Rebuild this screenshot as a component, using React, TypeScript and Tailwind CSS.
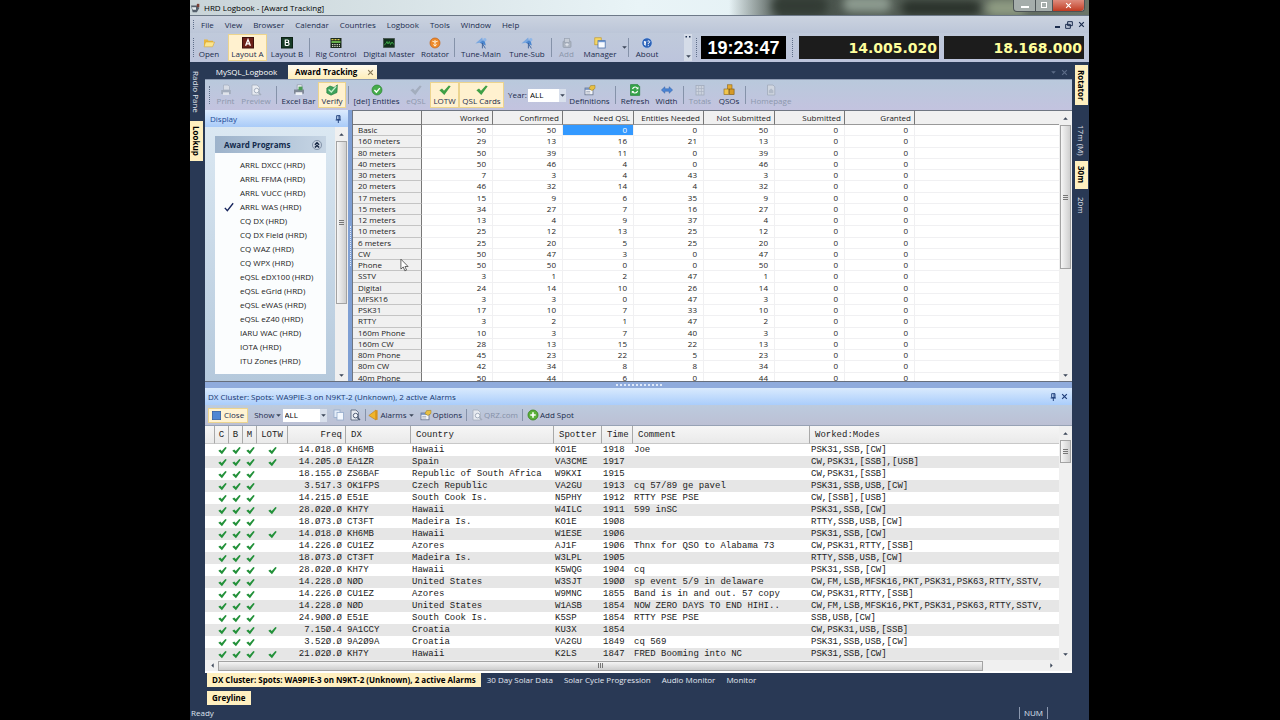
import type { ReactNode } from "react";

const menus = ["File", "View", "Browser", "Calendar", "Countries", "Logbook", "Tools", "Window", "Help"];

const programs = [
  "ARRL DXCC (HRD)", "ARRL FFMA (HRD)", "ARRL VUCC (HRD)", "ARRL WAS (HRD)", "CQ DX (HRD)",
  "CQ DX Field (HRD)", "CQ WAZ (HRD)", "CQ WPX (HRD)", "eQSL eDX100 (HRD)", "eQSL eGrid (HRD)",
  "eQSL eWAS (HRD)", "eQSL eZ40 (HRD)", "IARU WAC (HRD)", "IOTA (HRD)", "ITU Zones (HRD)",
];

const awardColumns = ["Worked", "Confirmed", "Need QSL", "Entities Needed", "Not Submitted", "Submitted", "Granted"];

const awards: [string, number[]][] = [
  ["Basic", [50, 50, 0, 0, 50, 0, 0]],
  ["160 meters", [29, 13, 16, 21, 13, 0, 0]],
  ["80 meters", [50, 39, 11, 0, 39, 0, 0]],
  ["40 meters", [50, 46, 4, 0, 46, 0, 0]],
  ["30 meters", [7, 3, 4, 43, 3, 0, 0]],
  ["20 meters", [46, 32, 14, 4, 32, 0, 0]],
  ["17 meters", [15, 9, 6, 35, 9, 0, 0]],
  ["15 meters", [34, 27, 7, 16, 27, 0, 0]],
  ["12 meters", [13, 4, 9, 37, 4, 0, 0]],
  ["10 meters", [25, 12, 13, 25, 12, 0, 0]],
  ["6 meters", [25, 20, 5, 25, 20, 0, 0]],
  ["CW", [50, 47, 3, 0, 47, 0, 0]],
  ["Phone", [50, 50, 0, 0, 50, 0, 0]],
  ["SSTV", [3, 1, 2, 47, 1, 0, 0]],
  ["Digital", [24, 14, 10, 26, 14, 0, 0]],
  ["MFSK16", [3, 3, 0, 47, 3, 0, 0]],
  ["PSK31", [17, 10, 7, 33, 10, 0, 0]],
  ["RTTY", [3, 2, 1, 47, 2, 0, 0]],
  ["160m Phone", [10, 3, 7, 40, 3, 0, 0]],
  ["160m CW", [28, 13, 15, 22, 13, 0, 0]],
  ["80m Phone", [45, 23, 22, 5, 23, 0, 0]],
  ["80m CW", [42, 34, 8, 8, 34, 0, 0]],
  ["40m Phone", [50, 44, 6, 0, 44, 0, 0]],
];

// LOTW flag, frequency, DX, country, spotter, time, comment, modes
type Spot = [boolean, string, string, string, string, string, string, string];
const allModes = "CW,FM,LSB,MFSK16,PKT,PSK31,PSK63,RTTY,SSTV,";
const spots: Spot[] = [
  [true, "14.Ø18.Ø", "KH6MB", "Hawaii", "KO1E", "1918", "Joe", "PSK31,SSB,[CW]"],
  [true, "14.2Ø5.Ø", "EA1ZR", "Spain", "VA3CME", "1917", "", "CW,PSK31,[SSB],[USB]"],
  [false, "18.155.Ø", "ZS6BAF", "Republic of South Africa", "W9KXI", "1915", "", "CW,PSK31,[SSB]"],
  [false, "3.517.3", "OK1FPS", "Czech Republic", "VA2GU", "1913", "cq 57/89 ge pavel", "PSK31,SSB,USB,[CW]"],
  [false, "14.215.Ø", "E51E", "South Cook Is.", "N5PHY", "1912", "RTTY PSE PSE", "CW,[SSB],[USB]"],
  [true, "28.Ø2Ø.Ø", "KH7Y", "Hawaii", "W4ILC", "1911", "599 inSC", "PSK31,SSB,[CW]"],
  [false, "18.Ø73.Ø", "CT3FT", "Madeira Is.", "KO1E", "19Ø8", "", "RTTY,SSB,USB,[CW]"],
  [true, "14.Ø18.Ø", "KH6MB", "Hawaii", "W1ESE", "19Ø6", "", "PSK31,SSB,[CW]"],
  [false, "14.226.Ø", "CU1EZ", "Azores", "AJ1F", "19Ø6", "Thnx for QSO to Alabama 73", "CW,PSK31,RTTY,[SSB]"],
  [false, "18.Ø73.Ø", "CT3FT", "Madeira Is.", "W3LPL", "19Ø5", "", "RTTY,SSB,USB,[CW]"],
  [true, "28.Ø2Ø.Ø", "KH7Y", "Hawaii", "K5WQG", "19Ø4", "cq", "PSK31,SSB,[CW]"],
  [false, "14.228.Ø", "NØD", "United States", "W3SJT", "19ØØ", "sp event 5/9 in delaware", allModes],
  [false, "14.226.Ø", "CU1EZ", "Azores", "W9MNC", "1855", "Band is in and out. 57 copy", "CW,PSK31,RTTY,[SSB]"],
  [false, "14.228.Ø", "NØD", "United States", "W1ASB", "1854", "NOW ZERO DAYS TO END HIHI..", allModes],
  [false, "24.9ØØ.Ø", "E51E", "South Cook Is.", "K5SP", "1854", "RTTY PSE PSE", "SSB,USB,[CW]"],
  [true, "7.15Ø.4", "9A1CCY", "Croatia", "KU3X", "1854", "", "CW,PSK31,USB,[SSB]"],
  [false, "3.52Ø.Ø", "9A2Ø9A", "Croatia", "VA2GU", "1849", "cq 569", "PSK31,SSB,USB,[CW]"],
  [true, "21.Ø2Ø.Ø", "KH7Y", "Hawaii", "K2LS", "1847", "FRED Booming into NC", "PSK31,SSB,[CW]"],
];

/* ---------- icons ---------- */

function Svg({ children, className = "h-3 w-3" }: { children: ReactNode; className?: string }) {
  return (
    <svg viewBox="0 0 12 12" className={className} aria-hidden="true">
      {children}
    </svg>
  );
}

const FolderIcon = () => (
  <Svg>
    <path d="M1 2.5h3.5l1 1.2H10V9H1z" fill="#e9b83e" />
    <path d="M2.6 5H11.5L9.6 9.8H1z" fill="#fbe58d" stroke="#d39c28" strokeWidth=".5" />
  </Svg>
);
const LayoutAIcon = () => (
  <Svg>
    <rect x=".5" y=".5" width="11" height="10.5" fill="#6b1f17" stroke="#3c120e" />
    <path d="M3.6 8.8 6 2.6l2.4 6.2M4.5 6.9h3" fill="none" stroke="#fff" strokeWidth="1.3" />
  </Svg>
);
const LayoutBIcon = () => (
  <Svg>
    <rect x=".5" y=".5" width="11" height="10.5" fill="#173b26" stroke="#0c2115" />
    <path d="M4.3 2.6v6M4.3 3h2.2q1.2 0 1.2 1.2T6.5 5.5H4.3M6.5 5.5q1.6 0 1.6 1.5T6.5 8.5H4.3" fill="none" stroke="#fff" strokeWidth="1.2" />
  </Svg>
);
const RigIcon = () => (
  <Svg>
    <rect x=".5" y="1" width="11" height="10" fill="#1c2a1c" />
    <path d="M1.5 2.6h9" stroke="#d9c94b" strokeWidth="1.2" strokeDasharray="2 1" />
    <path d="M1.5 5h9" stroke="#7bd35a" strokeWidth="1.6" />
    <path d="M2 7.6h8M2 9.4h8" stroke="#e6e8d8" strokeWidth="1" strokeDasharray="1.3 1" />
  </Svg>
);
const DigitalIcon = () => (
  <Svg>
    <rect x=".5" y="1.5" width="11" height="9" fill="#13301b" stroke="#38443c" strokeWidth=".6" />
    <path d="M1.2 8 3 6.5 4 4.5 5 7l1.3-2.5L7.5 7.5 9 5l1.8 2.5" fill="none" stroke="#3fae4c" strokeWidth=".9" />
  </Svg>
);
const RotatorIcon = () => (
  <Svg>
    <circle cx="6" cy="6" r="5" fill="#ee8b2d" stroke="#c25f11" strokeWidth=".7" />
    <path d="M3.3 4.2q2.7 2 5.4 0M6 3v6M4.4 7.4 6 9.2l1.6-1.8" fill="none" stroke="#fff2d8" strokeWidth="1" />
  </Svg>
);
const TuneIcon = () => (
  <Svg>
    <path d="M.4 6.4 7.200 .6l1 4.600z" fill="#7ba8e0" />
    <path d="m4.600 5.800 4.800-3.400 1.400 6z" fill="#4a86cf" />
    <path d="m7 6 3.400 5.400M7.400 6v5.400" stroke="#3a5f99" strokeWidth=".9" />
    <circle cx="9.800" cy="2.800" r="1.700" fill="#90b7e8" />
  </Svg>
);
const AddIcon = () => (
  <Svg>
    <rect x="2" y="4" width="8" height="6.5" rx="1" fill="#adb5c2" stroke="#929cab" strokeWidth=".7" />
    <rect x="3.6" y="1.5" width="5" height="4" fill="#c6ccd6" stroke="#98a1b0" strokeWidth=".7" />
    <path d="M6 6v3.4M4.3 7.7h3.4" stroke="#e4e8ee" />
  </Svg>
);
const ManagerIcon = () => (
  <Svg>
    <rect x=".8" y=".8" width="6.4" height="7" fill="#f6d765" stroke="#c49a28" strokeWidth=".7" />
    <rect x="4" y="3.6" width="7.2" height="7.4" fill="#f8fbff" stroke="#4b72ab" strokeWidth=".8" />
    <path d="M4 4.6h7.2" stroke="#6d97d3" strokeWidth="1.2" />
  </Svg>
);
const AboutIcon = () => (
  <Svg>
    <circle cx="6" cy="6" r="5.2" fill="#2d63b8" stroke="#c6d8f0" strokeWidth=".7" />
    <path d="M3.4 4v2.6q0 1.6 1.4 1.6M6.6 4.2q2-1 2.2.5 0 1-1.5 1.6v.9M7.3 8.2v.9M4.8 4.2 4 8" fill="none" stroke="#fff" strokeWidth="1" />
  </Svg>
);
const PrinterIcon = ({ color = "#a3adbd" }: { color?: string }) => (
  <Svg>
    <path d="M3.5 1h4.6l1.4 1.5V6h-6z" fill="#d8dde6" stroke={color} strokeWidth=".7" />
    <path d="M1.2 6h9.6v4H1.2z" fill={color} />
    <path d="M3 8.3h6V11H3z" fill="#dfe3ea" />
  </Svg>
);
const PreviewIcon = ({ color = "#a3adbd" }: { color?: string }) => (
  <Svg>
    <path d="M2 1h5l2.4 2.4V11H2z" fill="#e6eaf0" stroke={color} strokeWidth=".8" />
    <circle cx="6.6" cy="6.6" r="2.3" fill="#f3f6fa" stroke={color} />
    <path d="m8.4 8.4 2.6 2.6" stroke={color} strokeWidth="1.4" />
  </Svg>
);
const ExcelIcon = () => (
  <Svg>
    <path d="M4.2.8H9v4.8H4.2z" fill="#f6f8fb" stroke="#8a94a5" strokeWidth=".7" />
    <path d="M1 5.5h10v4.2H1z" fill="#7f8897" />
    <path d="M2.6 8.2h6.6V11H2.6z" fill="#eef1f5" />
    <path d="M5.5 2.6h4v3.6h-4z" fill="#4c9c57" />
  </Svg>
);
const VerifyIcon = () => (
  <Svg>
    <path d="M.8 4 4 2l4 1.500L11.400.8 11 8.500 5 11.200.8 9z" fill="#3fa35b" stroke="#1d7b3c" strokeWidth=".6" />
    <path d="m2.600 5.600 2.700 2.400 5-5.600" fill="none" stroke="#c9f0cd" strokeWidth="1.300" />
  </Svg>
);
const EntitiesIcon = () => (
  <Svg>
    <circle cx="6" cy="6" r="5" fill="#46ad4b" stroke="#2a8231" strokeWidth=".7" />
    <path d="m3.4 6 2 2.1 3.4-4" fill="none" stroke="#fff" strokeWidth="1.4" />
  </Svg>
);
const TickIcon = ({ color = "#3fa046", className }: { color?: string; className?: string }) => (
  <Svg className={className}>
    <path d="M.4 6.200 3 4.600l2 2.200L9.800 1.400l1.900.9-6.400 8.700z" fill={color} />
  </Svg>
);
const DefinitionsIcon = () => (
  <Svg>
    <rect x="1" y="4" width="8" height="6.8" fill="#f4f6fa" stroke="#66738c" strokeWidth=".8" />
    <path d="M1 5h8" stroke="#5b7fb8" strokeWidth="1.4" />
    <path d="M2.2 7.4h4M2.2 9h4" stroke="#8c96a8" strokeWidth=".7" />
    <path d="m5 4.6 1.6-3L11 1.4v3L8 6.6z" fill="#e8c043" stroke="#987a1d" strokeWidth=".5" />
  </Svg>
);
const RefreshIcon = () => (
  <Svg>
    <path d="M1.5.6h7.2l2 2v8.8H1.5z" fill="#35a447" stroke="#1d7a30" strokeWidth=".6" />
    <path d="M3.6 5.2Q4 3 6.2 3q1.6 0 2.2 1.2M8.6 6.8Q8 9 6 9q-1.500 0-2.300-1.200" fill="none" stroke="#fff" strokeWidth="1.2" />
    <path d="M9.400 2.800v2.400H7zM2.800 9.400V7h2.400z" fill="#fff" />
  </Svg>
);
const WidthIcon = () => (
  <Svg>
    <path d="M.4 6 3.800 2.800v2h4.400v-2L11.600 6 8.200 9.200v-2H3.800v2z" fill="#4b86d6" stroke="#2a5ba4" strokeWidth=".5" />
  </Svg>
);
const TotalsIcon = () => (
  <Svg>
    <rect x="2" y="1.500" width="8" height="9.500" fill="#ccd3de" stroke="#a1abbb" strokeWidth=".8" />
    <path d="M4.600 1.500V11M7.400 1.500V11M2 4.500h8M2 7.500h8" stroke="#a9b2c1" strokeWidth=".7" />
  </Svg>
);
const QsosIcon = () => (
  <Svg>
    <rect x="4.500" y=".8" width="4.500" height="4.500" fill="#e3a92f" stroke="#8c6516" strokeWidth=".6" />
    <rect x="1" y="5" width="4.800" height="5.600" fill="#f0c64e" stroke="#8c6516" strokeWidth=".6" />
    <rect x="6.300" y="5" width="4.800" height="5.600" fill="#d69a26" stroke="#7a5712" strokeWidth=".6" />
  </Svg>
);
const HomeIcon = () => (
  <Svg>
    <path d="M2.500 1h5.500l1.800 1.800V11H2.500z" fill="#d0d6e0" stroke="#a1abbb" strokeWidth=".8" />
    <path d="m3.800 6.600 2.300-2.200 2.300 2.200v2.600H3.800z" fill="#b1bac8" />
  </Svg>
);
const CloseIcon = () => (
  <Svg className="h-[9px] w-[9px]">
    <rect x=".5" y=".5" width="11" height="11" fill="#4f86d3" stroke="#2c5aa0" />
  </Svg>
);
const CopyIcon = () => (
  <Svg>
    <rect x="1" y="1" width="6" height="7.500" fill="#e4edf8" stroke="#93abcb" strokeWidth=".8" />
    <rect x="4" y="3.500" width="6.500" height="7.500" fill="#f3f8fe" stroke="#93abcb" strokeWidth=".8" />
  </Svg>
);
const BellIcon = () => (
  <Svg>
    <path d="M.8 6.500 8 1v10z" fill="#f0b52c" stroke="#b87b12" strokeWidth=".6" />
    <path d="M7.600 1.200h2v9.600h-2z" fill="#d8931b" />
  </Svg>
);
const PlusIcon = () => (
  <Svg>
    <circle cx="6" cy="6" r="5" fill="#5cb13b" stroke="#35801c" strokeWidth=".8" />
    <path d="M6 3.300v5.400M3.300 6h5.400" stroke="#fff" strokeWidth="1.600" />
  </Svg>
);
const PinIcon = () => (
  <Svg className="h-2 w-2">
    <path d="M4 1h5v6H4zM2.500 7.500h8M6.500 7.500V12" fill="none" stroke="#1d3c78" strokeWidth="1.400" />
    <path d="M7.500 1v6" stroke="#1d3c78" strokeWidth="1.400" />
  </Svg>
);
const CrossIcon = ({ color = "#1d3c78" }: { color?: string }) => (
  <Svg className="h-[7px] w-[7px]">
    <path d="m2 2 8 8M10 2l-8 8" stroke={color} strokeWidth="2" />
  </Svg>
);
const Triangle = ({ dir = "down", color = "#3b4658" }: { dir?: "up" | "down" | "left" | "right"; color?: string }) => {
  const d = { up: "M2 8h8L6 4z", down: "M2 4h8L6 8z", left: "M8 2v8L4 6z", right: "M4 2v8l4-4z" }[dir];
  return (
    <Svg className="h-[7px] w-[7px] shrink-0">
      <path d={d} fill={color} />
    </Svg>
  );
};

/* ---------- small parts ---------- */

function ToolButton({ icon, label, width, active, disabled }: {
  icon: ReactNode; label: string; width: string; active?: boolean; disabled?: boolean;
}) {
  const tone = active ? "border-[#ecd48e] bg-[#fff1cf]" : "border-transparent";
  return (
    <button
      type="button"
      disabled={disabled}
      aria-pressed={active}
      className={`flex shrink-0 flex-col items-center justify-center border ${tone} ${width} ${disabled ? "text-[#8c97ac]" : "text-[#1b2c4d]"}`}
    >
      {icon}
      <span className="whitespace-nowrap leading-[10px]">{label}</span>
    </button>
  );
}

const Sep = ({ className = "w-[5px]" }: { className?: string }) => (
  <div className={`flex shrink-0 justify-center py-1 ${className}`}>
    <div className="w-px bg-[#8592a9]" />
  </div>
);

const Grip = ({ className = "" }: { className?: string }) => (
  <div className={`my-1 w-0 shrink-0 border-l border-dotted border-[#5f6e89] ${className}`} />
);

function Combo({ label, width }: { label: string; width: string }) {
  return (
    <div className={`relative h-[13px] shrink-0 bg-white ${width}`}>
      <select aria-label={label} defaultValue="ALL" className="block h-[12px] w-full appearance-none pl-[2px] leading-[12px] text-black">
        <option>ALL</option>
      </select>
      <div className="pointer-events-none absolute inset-y-0 right-0 flex items-center bg-[#d9e0ec]">
        <Triangle />
      </div>
    </div>
  );
}

function VScroll({ thumb }: { thumb: string }) {
  return (
    <div className="flex w-[13px] shrink-0 flex-col items-center bg-[#f0f0f0]">
      <div className="flex h-[14px] items-center"><Triangle dir="up" /></div>
      <div className={`flex w-[11px] items-center justify-center border border-[#a3a3a3] bg-linear-to-r from-[#f6f6f6] to-[#cfcfcf] ${thumb}`}>
        <div className="h-[5px] w-[5px] border-y border-[#777]">
          <div className="mt-px h-px bg-[#777]" />
        </div>
      </div>
      <div className="flex-1" />
      <div className="flex h-[12px] items-center"><Triangle dir="down" /></div>
    </div>
  );
}

const RailTab = ({ label, active, className = "" }: { label: string; active?: boolean; className?: string }) => (
  <button
    type="button"
    className={`w-[13px] whitespace-nowrap text-center leading-[13px] [writing-mode:vertical-rl] ${active ? "bg-[#fff0c0] font-bold text-black" : "text-[#e3e8f1]"} ${className}`}
  >
    {label}
  </button>
);

/* ---------- sections ---------- */

function TitleBar() {
  return (
    <header className="relative flex h-4 shrink-0 items-center overflow-hidden border-b border-[#6d7988] bg-[#dfecf1] text-black">
      <div className="absolute inset-0 bg-linear-to-r from-[#c9d4d8] via-[#e9f4f7] to-[#dcebf0]" />
      <div className="absolute inset-y-0 right-0 w-[40%] bg-linear-to-r from-transparent via-[#46504a] via-15% to-[#6b7568]" />
      <div className="absolute -top-1 right-[22%] h-4 w-12 rounded-full bg-[#8d9b90] blur-xs" />
      <div className="absolute top-0 right-[12%] h-4 w-20 rounded-full bg-[#2b332c] blur-xs" />
      <div className="absolute -top-1 right-[29%] h-5 w-14 rounded-full bg-[#333c35] blur-xs" />
      <div className="absolute top-0 right-[7%] h-4 w-10 rounded-full bg-[#8f9c83] blur-xs" />
      <div className="relative flex w-full items-center">
        <Svg className="ml-px h-[10px] w-[10px]">
          <path d="M0 3h7l3 3-3 5H2z" fill="#55606c" />
          <path d="M1 5h5v3H2z" fill="#e9eef2" />
          <path d="M7 1h3v4H7z" fill="#7b3f35" />
        </Svg>
        <h1 className="ml-[3px] leading-[14px]">HRD Logbook - [Award Tracking]</h1>
        <div className="mr-1 mb-1 ml-auto flex h-3 rounded-b-sm border border-t-0 border-[#4c5355] bg-[#a5adab]">
          <button type="button" aria-label="Minimize" className="flex w-[22px] items-end justify-center border-r border-[#4c5355] pb-[3px]">
            <span className="h-[2px] w-2 bg-white" />
          </button>
          <button type="button" aria-label="Restore" className="flex w-[17px] items-center justify-center border-r border-[#4c5355]">
            <span className="h-[6px] w-[6px] border border-white" />
          </button>
          <button type="button" aria-label="Close" className="flex w-[31px] items-center justify-center rounded-br-sm bg-linear-to-b from-[#dd8b7c] to-[#c0391f]">
            <CrossIcon color="#fff" />
          </button>
        </div>
      </div>
    </header>
  );
}

function MenuBar() {
  return (
    <nav className="flex h-[17px] shrink-0 items-center bg-linear-to-b from-[#cbd3e0] to-[#bcc6d8] text-[#1b2c4d]">
      <Grip className="ml-[3px] self-stretch" />
      <div className="ml-[7px] flex gap-[11px]">
        {menus.map((m) => (
          <button type="button" key={m}>{m}</button>
        ))}
      </div>
      <div className="mr-1 ml-auto flex items-center gap-[5px]">
        <button type="button" aria-label="Minimize document" className="mt-1 h-[2px] w-[5px] bg-[#1b2c4d]" />
        <button type="button" aria-label="Restore document">
          <Svg className="h-2 w-2">
            <path d="M4 1h7v6H4zM1 5h7v6H1z" fill="#c2cbdb" stroke="#1b2c4d" strokeWidth="1.500" />
          </Svg>
        </button>
        <button type="button" aria-label="Close document"><CrossIcon color="#1b2c4d" /></button>
      </div>
    </nav>
  );
}

function MainToolbar() {
  return (
    <div className="flex h-[29px] shrink-0 bg-linear-to-b from-[#c0cadb] to-[#bcc4dc] py-px">
      <Grip className="mr-[-1px] ml-[3px]" />
      <ToolButton icon={<FolderIcon />} label="Open" width="w-[32px]" />
      <div className="w-[3px]" />
      <ToolButton icon={<LayoutAIcon />} label="Layout A" width="w-[39px]" active />
      <ToolButton icon={<LayoutBIcon />} label="Layout B" width="w-[40px]" />
      <Sep />
      <ToolButton icon={<RigIcon />} label="Rig Control" width="w-[48px]" />
      <ToolButton icon={<DigitalIcon />} label="Digital Master" width="w-[58px]" />
      <ToolButton icon={<RotatorIcon />} label="Rotator" width="w-[34px]" />
      <Sep />
      <ToolButton icon={<TuneIcon />} label="Tune-Main" width="w-[48px]" />
      <ToolButton icon={<TuneIcon />} label="Tune-Sub" width="w-[44px]" />
      <Sep />
      <ToolButton icon={<AddIcon />} label="Add" width="w-[25px]" disabled />
      <ToolButton icon={<ManagerIcon />} label="Manager" width="w-[42px]" />
      <div className="flex w-[5px] items-center"><Triangle /></div>
      <Sep />
      <ToolButton icon={<AboutIcon />} label="About" width="w-[32px]" />
      <div className="ml-auto flex w-[8px] flex-col items-center justify-between bg-[#d5dce8] py-px leading-[8px] text-[#1b2c4d]">
        <Svg className="h-[6px] w-[6px]">
          <path d="M1 2h3v3H1zM8 2h3v3H8z" fill="#1b2c4d" />
        </Svg>
        <Triangle />
      </div>
      <Grip className="mx-1" />
      <div className="my-[2px] flex w-[85px] items-center justify-center bg-black font-['Liberation_Sans',sans-serif] text-[18px] leading-none font-bold text-white">
        19:23:47
      </div>
      <Grip className="mx-[6px]" />
      {["14.005.020", "18.168.000"].map((f) => (
        <div key={f} className="my-[2px] mr-[5px] flex w-[140px] items-center justify-end bg-[#1c1c1c] pr-[2px] font-['DejaVu_Sans',sans-serif] text-[14px] leading-none font-bold text-[#ffff9c]">
          {f}
        </div>
      ))}
    </div>
  );
}

function AwardToolbar() {
  return (
    <div className="flex h-[31px] shrink-0 border-t border-[#8e9bb3] bg-linear-to-b from-[#b9c9dc] to-[#c3c3df] py-[2px]">
      <Grip className="mr-[3px] ml-[4px]" />
      <ToolButton icon={<PrinterIcon />} label="Print" width="w-[25px]" disabled />
      <ToolButton icon={<PreviewIcon />} label="Preview" width="w-[36px]" disabled />
      <Sep />
      <ToolButton icon={<ExcelIcon />} label="Excel Bar" width="w-[39px]" />
      <ToolButton icon={<VerifyIcon />} label="Verify" width="w-[28px]" active />
      <Sep />
      <ToolButton icon={<EntitiesIcon />} label="[del] Entities" width="w-[51px]" />
      <ToolButton icon={<TickIcon color="#a3adbd" />} label="eQSL" width="w-[28px]" disabled />
      <ToolButton icon={<TickIcon />} label="LOTW" width="w-[29px]" active />
      <ToolButton icon={<TickIcon />} label="QSL Cards" width="w-[45px]" active />
      <div className="flex w-[62px] items-center justify-between text-[#1b2c4d]">
        <span className="ml-[4px]">Year:</span>
        <Combo label="Year" width="w-[38px]" />
      </div>
      <ToolButton icon={<DefinitionsIcon />} label="Definitions" width="w-[47px]" />
      <Sep />
      <ToolButton icon={<RefreshIcon />} label="Refresh" width="w-[34px]" />
      <ToolButton icon={<WidthIcon />} label="Width" width="w-[29px]" />
      <Sep />
      <ToolButton icon={<TotalsIcon />} label="Totals" width="w-[28px]" disabled />
      <ToolButton icon={<QsosIcon />} label="QSOs" width="w-[30px]" />
      <Sep className="w-[3px]" />
      <ToolButton icon={<HomeIcon />} label="Homepage" width="w-[48px]" disabled />
    </div>
  );
}

function DisplayPanel() {
  return (
    <aside className="flex w-[143px] shrink-0 flex-col">
      <div className="flex h-[17px] shrink-0 items-center justify-between bg-linear-to-b from-[#dcebfd] to-[#a9cbf8] pr-[6px] pl-[5px] text-[#1b4b98]">
        <h2>Display</h2>
        <PinIcon />
      </div>
      <div className="flex min-h-0 flex-1 bg-linear-to-b from-[#dbe8f2] to-[#b5c9dc]">
        <div className="flex flex-1 flex-col py-[7px] pr-[9px] pl-[10px]">
          <div className="mt-[2px] flex h-[17px] shrink-0 items-center justify-between bg-linear-to-r from-[#9db3cb] to-[#c6d5e4] pr-1 pl-[9px] text-[#122a4c]">
            <h3 className="font-bold">Award Programs</h3>
            <Svg className="h-[10px] w-[10px]">
              <circle cx="6" cy="6" r="5.500" fill="#c3cfde" stroke="#5a6c86" strokeWidth=".7" />
              <path d="m3.500 5.600 2.500-2.400 2.500 2.400M3.500 9 6 6.600 8.500 9" fill="none" stroke="#10223f" strokeWidth="1.600" />
            </Svg>
          </div>
          <ul className="min-h-0 flex-1 overflow-hidden bg-[#fbfdfe] pt-[5px]">
            {programs.map((p) => (
              <li key={p} className="flex h-[14px] items-center">
                <span className="flex w-[25px] shrink-0 pl-[9px]">
                  {p === "ARRL WAS (HRD)" && (
                    <Svg className="h-[10px] w-[10px]">
                      <path d="m1 7 3 3.500L11 1.500" fill="none" stroke="#16245c" strokeWidth="1.600" />
                    </Svg>
                  )}
                </span>
                <a href="#" className="whitespace-nowrap text-[#222]">{p}</a>
              </li>
            ))}
          </ul>
        </div>
        <VScroll thumb="h-[163px]" />
      </div>
    </aside>
  );
}

function AwardTable() {
  return (
    <div className="flex min-w-0 flex-1 border-t border-l border-[#6f7682] bg-white">
      <div className="relative min-w-0 flex-1 overflow-hidden">
        <table className="h-[273px] w-full table-fixed border-separate border-spacing-0 leading-[10px] text-[#1c1c1c]">
          <colgroup>
            <col className="w-[69px]" />
            {awardColumns.map((c, i) => (
              <col key={c} className={i % 2 === 0 && i < 5 ? "w-[71px]" : "w-[70px]"} />
            ))}
            <col />
          </colgroup>
          <thead>
            <tr className="h-[14px] bg-[#f0f0f0]">
              <td className="border-r border-b border-[#777]" />
              {awardColumns.map((c) => (
                <th key={c} scope="col" className="h-[14px] border-r border-b border-r-[#777] border-b-[#999] p-0 pr-[3px] text-right font-normal whitespace-nowrap">
                  {c}
                </th>
              ))}
              <td className="border-b border-[#999]" />
            </tr>
          </thead>
          <tbody>
            {awards.map(([name, values]) => (
              <tr key={name}>
                <th scope="row" className="border-r border-b border-r-[#777] border-b-[#c4c4c4] bg-[#f0f0f0] p-0 pl-[5px] text-left font-normal">
                  {name}
                </th>
                {values.map((v, i) => (
                  <td
                    key={i}
                    className={`border-r border-b border-[#f0f0f2] p-0 pr-[6px] text-right ${name === "Basic" && i === 2 ? "bg-[#3399ff] text-white" : ""}`}
                  >
                    {v}
                  </td>
                ))}
                <td className="border-b border-[#f0f0f2] p-0" />
              </tr>
            ))}
          </tbody>
        </table>
        <svg viewBox="0 0 10 15" className="absolute top-[147px] left-[47px] h-[14px] w-[9px]" aria-hidden="true">
          <path d="M1 1v11l2.600-2.300L5.400 14l1.900-.8-1.800-4H9z" fill="#fff" stroke="#444" strokeWidth=".9" />
        </svg>
      </div>
      <VScroll thumb="h-[144px]" />
    </div>
  );
}

const spotHeads = ["", "C", "B", "M", "LOTW", "Freq", "DX", "Country", "Spotter", "Time", "Comment", "Worked:Modes"];

function SpotTable() {
  const text = "overflow-hidden p-0 pl-px text-left whitespace-nowrap";
  const tick = (
    <td className="p-0">
      <TickIcon color="#23913a" className="mx-auto block h-[9px] w-[9px]" />
    </td>
  );
  return (
    <div className="flex h-[234px] shrink-0 overflow-hidden bg-white">
      <div className="min-w-0 flex-1 overflow-hidden">
        <table className="w-full table-fixed border-separate border-spacing-0 font-['Liberation_Mono',monospace] text-[9px] leading-[12px] text-[#222]">
          <colgroup>
            <col className="w-[10px]" />
            <col className="w-[14px]" />
            <col className="w-[14px]" />
            <col className="w-[14px]" />
            <col className="w-[31px]" />
            <col className="w-[58px]" />
            <col className="w-[65px]" />
            <col className="w-[143px]" />
            <col className="w-[48px]" />
            <col className="w-[31px]" />
            <col className="w-[177px]" />
            <col />
          </colgroup>
          <thead>
            <tr className="bg-linear-to-b from-[#f6f6f6] to-[#e9e9e9]">
              {spotHeads.map((h, i) => (
                <th
                  key={i}
                  scope="col"
                  className={`h-[18px] border-b border-b-[#c8c8c8] p-0 font-normal ${i < 11 ? "border-r border-r-[#a9a9a9]" : ""} ${i < 5 ? "text-center" : i === 5 ? "pr-[3px] text-right" : "pl-[5px] text-left"}`}
                >
                  {h}
                </th>
              ))}
            </tr>
          </thead>
          <tbody>
            {spots.map(([lotw, freq, dx, country, spotter, time, comment, modes], i) => (
              <tr key={i} className="h-[12px] even:bg-[#e6e6e6]">
                <td className="p-0" />
                {tick}
                {tick}
                {tick}
                {lotw ? tick : <td className="p-0" />}
                <td className="p-0 pr-1 text-right">{freq}</td>
                <td className={text}>{dx}</td>
                <td className={text}>{country}</td>
                <td className={text}>{spotter}</td>
                <td className={text}>{time}</td>
                <td className={text}>{comment}</td>
                <td className={text}>{modes}</td>
              </tr>
            ))}
          </tbody>
        </table>
      </div>
      <VScroll thumb="h-[23px]" />
    </div>
  );
}

function ClusterPanel() {
  return (
    <section className="flex shrink-0 flex-col">
      <div className="flex h-[17px] items-center bg-linear-to-b from-[#d9eafd] to-[#aacdfb] pr-[4px] pl-[3px] text-[#16376f]">
        <h2>DX Cluster: Spots: WA9PIE-3 on N9KT-2 (Unknown), 2 active Alarms</h2>
        <div className="ml-auto flex items-center gap-1">
          <PinIcon />
          <CrossIcon />
        </div>
      </div>
      <div className="flex h-[21px] items-center border-b border-[#97a2b5] bg-linear-to-b from-[#bccbde] to-[#bcc0d4] text-[#1b2c4d]">
        <button type="button" className="ml-[3px] flex h-[15px] items-center gap-[3px] border border-[#ecd48e] bg-[#fff3d3] px-[3px]">
          <CloseIcon />
          Close
        </button>
        <button type="button" className="ml-[6px] flex items-center">Show<Triangle /></button>
        <div className="ml-px"><Combo label="Show spots" width="w-[44px]" /></div>
        <div className="ml-[6px] flex items-center gap-[4px]">
          <button type="button" aria-label="Copy"><CopyIcon /></button>
          <button type="button" aria-label="Preview spots"><PreviewIcon color="#4f5d75" /></button>
        </div>
        <Sep className="ml-[2px] w-[5px] self-stretch" />
        <button type="button" className="flex items-center gap-px"><BellIcon />Alarms<Triangle /></button>
        <button type="button" className="ml-[5px] flex items-center gap-px"><DefinitionsIcon />Options</button>
        <Sep className="mx-[2px] w-[5px] self-stretch" />
        <button type="button" disabled className="flex items-center gap-px text-[#8491a8]">
          <PreviewIcon />QRZ.com
        </button>
        <Sep className="mx-[2px] w-[5px] self-stretch" />
        <button type="button" className="flex items-center gap-px"><PlusIcon />Add Spot</button>
      </div>
      <SpotTable />
      <div className="flex h-[13px] items-center border-b-2 border-white bg-[#f0f0f0] pr-[17px] pl-[4px]">
        <Triangle dir="left" />
        <div className="flex flex-1">
          <div className="ml-[2px] flex h-[10px] w-[92%] items-center justify-center border border-[#a3a3a3] bg-linear-to-b from-[#f5f5f5] to-[#cdcdcd]">
            <div className="flex h-[5px] w-[5px] justify-center border-x border-[#777]"><div className="w-px bg-[#777]" /></div>
          </div>
        </div>
        <Triangle dir="right" />
      </div>
    </section>
  );
}

export default function App() {
  return (
    <div className="flex h-screen justify-center bg-black pr-[191px] pl-[190px] font-['Open_Sans','Noto_Sans',sans-serif] text-[8px] leading-[12px]">
      <div className="flex min-w-0 flex-1 flex-col overflow-hidden bg-[#293955]">
        <TitleBar />
        <MenuBar />
        <MainToolbar />
        <main className="flex min-h-0 flex-1">
          <div className="flex w-[15px] shrink-0 flex-col items-start pt-[3px]">
            <RailTab label="Radio Pane" className="h-[54px]" />
            <RailTab label="Lookup" active className="mt-[2px] h-[40px]" />
          </div>
          <div className="flex min-w-0 flex-1 flex-col pt-[3px]">
            <div className="flex h-[14px] shrink-0 items-stretch">
              <button type="button" className="w-[83px] text-white">MySQL_Logbook</button>
              <button type="button" className="flex w-[89px] items-center justify-between bg-linear-to-b from-[#fffaf0] to-[#ffeeb8] pr-[3px] pl-[7px] font-bold text-black">
                Award Tracking
                <CrossIcon color="#8a7b58" />
              </button>
              <div className="mr-1 ml-auto flex items-center gap-1">
                <Triangle color="#5d6c88" />
                <CrossIcon color="#5d6c88" />
              </div>
            </div>
            <AwardToolbar />
            <div className="flex min-h-0 flex-1 border-b border-[#666e7c]">
              <DisplayPanel />
              <div className="flex w-1 shrink-0 items-center bg-[#7f9fd3]">
                <div className="mx-auto h-10 border-l border-dotted border-[#dfe9f8]" />
              </div>
              <AwardTable />
            </div>
            <div className="flex h-[6px] shrink-0 items-center justify-center bg-[#8fabdc]">
              <div className="w-[46px] border-t-2 border-dotted border-[#dfe9f8]" />
            </div>
            <ClusterPanel />
            <div className="flex h-[14px] shrink-0 items-stretch text-[#e3e8f1]">
              <button type="button" className="mr-[6px] ml-[2px] bg-[#fff0c0] px-[5px] font-bold whitespace-nowrap text-black">
                DX Cluster: Spots: WA9PIE-3 on N9KT-2 (Unknown), 2 active Alarms
              </button>
              <div className="flex gap-[11px]">
                {["30 Day Solar Data", "Solar Cycle Progression", "Audio Monitor", "Monitor"].map((t) => (
                  <button type="button" key={t} className="whitespace-nowrap">{t}</button>
                ))}
              </div>
            </div>
            <div className="mt-[4px] mb-px flex h-[14px] shrink-0 items-stretch">
              <button type="button" className="ml-[2px] bg-[#fff0c0] px-[5px] font-bold text-black">Greyline</button>
            </div>
          </div>
          <div className="flex w-[17px] shrink-0 flex-col items-end pt-[3px] pr-px">
            <RailTab label="Rotator" active className="h-[40px]" />
            <RailTab label="17m (M)" className="mt-[14px] h-[42px]" />
            <RailTab label="30m" active className="h-[28px]" />
            <RailTab label="20m" className="mt-px h-[30px]" />
          </div>
        </main>
        <footer className="flex h-[14px] shrink-0 items-center justify-between px-px text-[#dde3ee]">
          <span>Ready</span>
          <span className="mr-[40px] border-x border-[#8b98ae] px-[4px]">NUM</span>
        </footer>
      </div>
    </div>
  );
}
